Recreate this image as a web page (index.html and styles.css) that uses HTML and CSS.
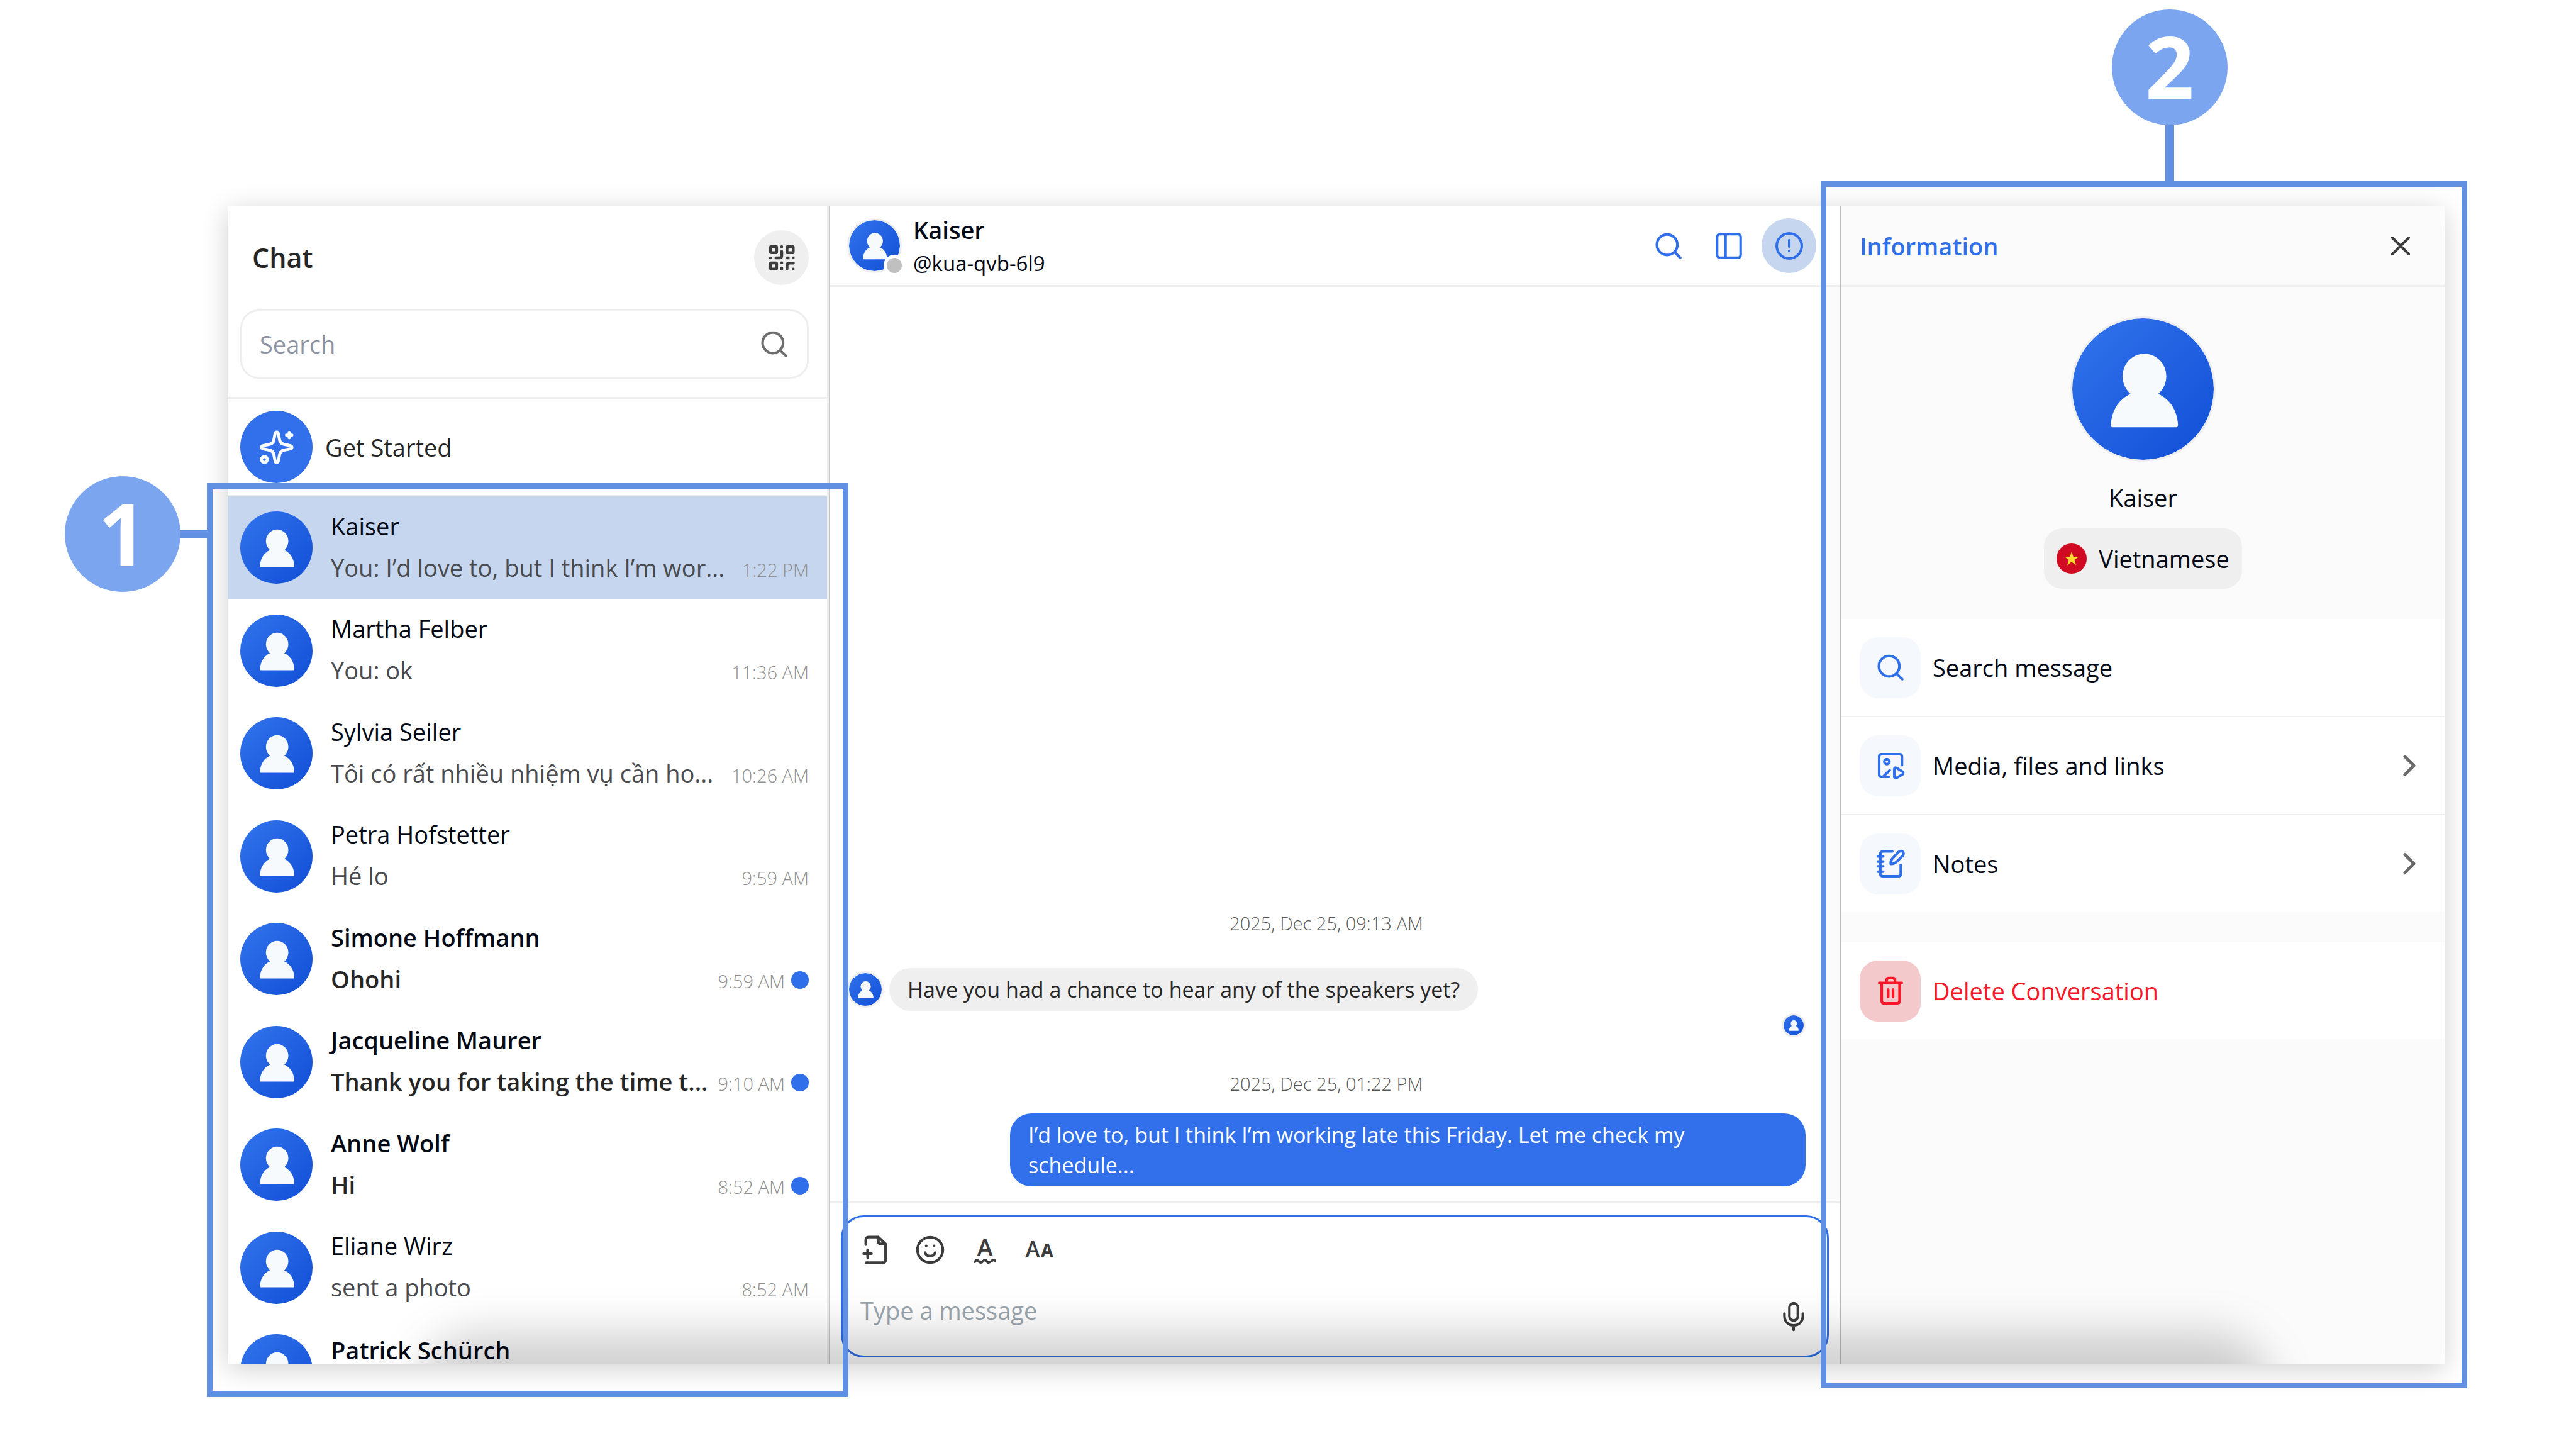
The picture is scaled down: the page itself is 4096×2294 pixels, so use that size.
FILE: index.html
```html
<!DOCTYPE html>
<html lang="en">
<head>
<meta charset="utf-8">
<title>Chat</title>
<link rel="stylesheet" href="styles.css">
</head>
<body>
<svg class="sprite" aria-hidden="true">
  <symbol id="person" viewBox="0 0 100 100">
    <ellipse cx="51" cy="41" rx="15.5" ry="16"/>
    <path d="M28.3 77Q27.2 77 27.3 74.500C28 65 33 57 41 53.500H61C69 57 74 65 74.700 74.500Q74.800 77 73.700 77Z"/>
  </symbol>
  <symbol id="search" viewBox="0 0 20 20">
    <circle cx="9.100" cy="9.200" r="6.800"/><path d="M13.900 14 17.800 17.800"/>
  </symbol>
  <symbol id="chevron" viewBox="0 0 20 20"><path d="M7 4 13 10 7 16"/></symbol>
</svg>

<div class="stage">
  <main class="app">
    <section class="sidebar">
      <header class="sidebar-head">
        <h1 class="sidebar-title">Chat</h1>
        <button class="round-btn qr" aria-label="QR code">
          <svg class="icon heavy" viewBox="0 0 20 20">
            <rect x="2.500" y="2.500" width="4.100" height="4.100" rx=".5"/>
            <rect x="13.500" y="2.500" width="4.100" height="4.100" rx=".5"/>
            <rect x="2.500" y="13.300" width="4.100" height="4.100" rx=".5"/>
            <path d="M10 2.600V2.610M10 5.800V8.500Q10 10 8.500 10H6.200M2.400 10H2.410M13.400 10H14.300M17.600 10H17.610M10 13.200V13.210M10 16.700V17.500M13.500 17.400V14.800Q13.500 13.400 15 13.400H17.700M17.600 17.400H17.610"/>
          </svg>
        </button>
      </header>
      <label class="search-box">
        <input class="search-input" type="text" placeholder="Search" aria-label="Search">
        <svg class="icon grey"><use href="#search"/></svg>
      </label>
      <a class="get-started" href="#start">
        <span class="avatar flat">
          <svg class="spark" viewBox="0 0 24 24">
            <path d="M10.900 3.200C11.200 1.600 12.800 1.600 13.100 3.200L14 7.600Q14.500 9.500 16.400 10L20.800 10.900C22.400 11.200 22.400 12.800 20.800 13.100L16.400 14Q14.500 14.500 14 16.400L13.100 20.800C12.800 22.400 11.200 22.400 10.900 20.800L10 16.400Q9.500 14.500 7.600 14L3.200 13.100C1.600 12.800 1.600 11.200 3.200 10.900L7.600 10Q9.500 9.500 10 7.600Z"/>
            <path d="M20.200 2.200V5.800M18.400 4H22"/><circle cx="3.900" cy="20.100" r="1.900"/>
          </svg>
        </span>
        <span>Get Started</span>
      </a>
      <ul class="chats">
        <li class="chat active">
          <span class="avatar"><svg><use href="#person"/></svg></span>
          <div class="chat-text"><p class="name">Kaiser</p>
            <div class="line"><p class="preview">You: I’d love to, but I think I’m wor...</p><time>1:22 PM</time></div></div>
        </li>
        <li class="chat">
          <span class="avatar"><svg><use href="#person"/></svg></span>
          <div class="chat-text"><p class="name">Martha Felber</p>
            <div class="line"><p class="preview">You: ok</p><time>11:36 AM</time></div></div>
        </li>
        <li class="chat">
          <span class="avatar"><svg><use href="#person"/></svg></span>
          <div class="chat-text"><p class="name">Sylvia Seiler</p>
            <div class="line"><p class="preview">Tôi có rất nhiều nhiệm vụ cần ho...</p><time>10:26 AM</time></div></div>
        </li>
        <li class="chat">
          <span class="avatar"><svg><use href="#person"/></svg></span>
          <div class="chat-text"><p class="name">Petra Hofstetter</p>
            <div class="line"><p class="preview">Hé lo</p><time>9:59 AM</time></div></div>
        </li>
        <li class="chat unread">
          <span class="avatar"><svg><use href="#person"/></svg></span>
          <div class="chat-text"><p class="name">Simone Hoffmann</p>
            <div class="line"><p class="preview">Ohohi</p><time>9:59 AM</time><i class="dot"></i></div></div>
        </li>
        <li class="chat unread">
          <span class="avatar"><svg><use href="#person"/></svg></span>
          <div class="chat-text"><p class="name">Jacqueline Maurer</p>
            <div class="line"><p class="preview">Thank you for taking the time t...</p><time>9:10 AM</time><i class="dot"></i></div></div>
        </li>
        <li class="chat unread">
          <span class="avatar"><svg><use href="#person"/></svg></span>
          <div class="chat-text"><p class="name">Anne Wolf</p>
            <div class="line"><p class="preview">Hi</p><time>8:52 AM</time><i class="dot"></i></div></div>
        </li>
        <li class="chat">
          <span class="avatar"><svg><use href="#person"/></svg></span>
          <div class="chat-text"><p class="name">Eliane Wirz</p>
            <div class="line"><p class="preview">sent a photo</p><time>8:52 AM</time></div></div>
        </li>
        <li class="chat unread">
          <span class="avatar"><svg><use href="#person"/></svg></span>
          <div class="chat-text"><p class="name">Patrick Schürch</p>
            <div class="line"><p class="preview"></p></div></div>
        </li>
      </ul>
    </section>

    <section class="thread">
      <header class="bar thread-head">
        <span class="avatar medium ring"><svg><use href="#person"/></svg><i class="status"></i></span>
        <div class="who"><h2 class="who-name">Kaiser</h2><p class="who-id">@kua-qvb-6l9</p></div>
        <button class="round-btn" aria-label="Search"><svg class="icon blue"><use href="#search"/></svg></button>
        <button class="round-btn" aria-label="Columns">
          <svg class="icon blue" viewBox="0 0 20 20"><rect x="2.200" y="2.200" width="15.600" height="15.600" rx="1.800"/><path d="M7.800 2.200V17.800"/></svg>
        </button>
        <button class="round-btn pressed" aria-label="Information">
          <svg class="icon blue" viewBox="0 0 20 20"><circle cx="10" cy="10" r="8.300"/><path d="M10 6.300V10.400M10 13.200V13.300"/></svg>
        </button>
      </header>
      <div class="scroller">
        <div class="messages">
          <p class="date first">2025, Dec 25, 09:13 AM</p>
          <div class="msg-in"><span class="avatar small ring"><svg><use href="#person"/></svg></span><p class="bubble">Have you had a chance to hear any of the speakers yet?</p></div>
          <span class="avatar tiny ring"><svg><use href="#person"/></svg></span>
          <p class="date">2025, Dec 25, 01:22 PM</p>
          <p class="bubble mine">I’d love to, but I think I’m working late this Friday. Let me check my schedule...</p>
        </div>
        <div class="track"></div>
      </div>
      <footer class="foot">
        <form class="composer">
          <div class="tools">
            <button type="button" class="tool" aria-label="Add file"><svg class="icon" viewBox="0 0 20 20"><path d="M3.600 6.500V3.200Q3.600 1.500 5.300 1.500H12L16.700 6V16.800Q16.700 18.500 15 18.500H3.900M12 1.800V4.700Q12 6 13.300 6H16.500M4.800 9.900V15.100M2.200 12.500H7.400"/></svg></button>
            <button type="button" class="tool" aria-label="Emoji"><svg class="icon" viewBox="0 0 20 20"><circle cx="10" cy="10" r="8.400"/><path d="M7.400 7.300V7.500M12.600 7.300V7.500M6.700 11.800C7.600 14.800 12.400 14.800 13.300 11.800"/></svg></button>
            <button type="button" class="tool" aria-label="Text style"><svg class="glyph" viewBox="0 0 58 58"><text x="29" y="39" font-size="38" font-weight="600">A</text><path d="M13 48Q16 43 19 47T26 47T32 47T39 47T45 47"/></svg></button>
            <button type="button" class="tool" aria-label="Font size"><svg class="glyph" viewBox="0 0 58 58"><text x="18" y="40" font-size="34" font-weight="600">A</text><text x="41" y="40" font-size="28" font-weight="700">A</text></svg></button>
          </div>
          <div class="entry">
            <textarea class="entry-text" rows="1" placeholder="Type a message" aria-label="Message"></textarea>
            <button type="button" class="mic" aria-label="Record"><svg class="icon" viewBox="0 0 20 20"><rect x="7.200" y="1.200" width="5.600" height="11.400" rx="2.800"/><path d="M3.900 8V9.600C3.900 17.900 16.100 17.900 16.100 9.600V8M10 16V18.900"/></svg></button>
          </div>
        </form>
      </footer>
    </section>

    <aside class="info">
      <header class="bar info-head">
        <h2 class="info-title">Information</h2>
        <button class="close" aria-label="Close"><svg class="icon" viewBox="0 0 20 20"><path d="M4.600 4.600 15.400 15.400M15.400 4.600 4.600 15.400"/></svg></button>
      </header>
      <div class="profile">
        <span class="avatar large ring"><svg><use href="#person"/></svg></span>
        <p class="profile-name">Kaiser</p>
        <p class="lang"><svg class="flag" viewBox="0 0 48 48"><circle cx="24" cy="24" r="24" fill="#cf0a22"/><path fill="#ffd92e" d="M24 13 26.700 21H35.200L28.400 26.100 31 34.500 24 29.300 17 34.500 19.600 26.100 12.800 21H21.300Z"/></svg>Vietnamese</p>
      </div>
      <nav class="menu">
        <a class="item" href="#search-message"><span class="tile"><svg class="icon"><use href="#search"/></svg></span><span class="label">Search message</span></a>
        <a class="item" href="#media"><span class="tile"><svg class="icon" viewBox="0 0 20 20"><path d="M17.600 9.800V4Q17.600 2.500 16.100 2.500H4Q2.500 2.500 2.500 4V15.900Q2.500 17.500 4 17.500H9.200M9.500 13.100 5.300 17.200M12.500 12.400C12.500 11.500 13.200 11.200 14 11.600L18 14.100Q18.900 15 18 15.800L14 18.200C13.200 18.600 12.500 18.300 12.500 17.400Z"/><circle cx="7.600" cy="7.400" r="1.700"/></svg></span><span class="label">Media, files and links</span><svg class="icon go"><use href="#chevron"/></svg></a>
        <a class="item" href="#notes"><span class="tile"><svg class="icon" viewBox="0 0 20 20"><path d="M11.200 1.900H5Q3.300 1.900 3.300 3.600V16.700Q3.300 18.400 5 18.400H15.200Q16.800 18.400 16.800 16.800V10.800M1.600 5.200H5.200M1.600 8.600H5.200M1.600 11.800H5.200M1.600 15.300H5.200M10.200 10.200C10 8.500 10.300 7.600 11.300 6.500L15.400 2.200C17.600.600 19.800 2.800 18 4.800L13.900 8.900C12.800 9.900 11.800 10.300 10.200 10.200Z"/></svg></span><span class="label">Notes</span><svg class="icon go"><use href="#chevron"/></svg></a>
      </nav>
      <button class="item danger"><span class="tile"><svg class="icon" viewBox="0 0 20 20"><path d="M2.500 4.800H17.500M7.400 4.600V3.200Q7.400 1.600 9 1.600H11.500Q13 1.600 13 3.200V4.600M4.200 5V16.800Q4.200 18.400 5.800 18.400H14.400Q16 18.400 16 16.800V5M8.500 9.200V14.200M11.700 9.200V14.200"/></svg></span><span class="label">Delete Conversation</span></button>
    </aside>
  </main>

  <div class="callout one"><span class="badge">1</span></div>
  <div class="callout two"><span class="badge">2</span></div>
</div>
</body>
</html>
```
FILE: styles.css
```css
* { box-sizing: border-box; margin: 0; padding: 0; }

body {
  min-height: 100vh;
  padding: 328px 209px 126px 362px;
  display: grid;
  background: #fff;
  color: #030a16;
  font-family: "Open Sans", "Noto Sans", sans-serif;
  font-size: 38px;
  line-height: 58px;
}
button { border: 0; background: none; font: inherit; color: inherit; }
a { color: inherit; text-decoration: none; }
input, textarea { border: 0; outline: 0; background: none; font: inherit; }
h1, h2 { font-size: inherit; font-weight: inherit; }
.sprite { position: absolute; width: 0; height: 0; }

.stage { position: relative; display: grid; }
.app {
  position: relative;
  display: grid;
  grid-template-columns: 958px 1fr 961px;
  overflow: hidden;
  height: calc(100vh - 454px);
  background: #fff;
}
.stage::before {
  content: "";
  position: absolute;
  inset: 0;
  box-shadow: 0 8px 40px rgba(0, 0, 0, .19);
}
/* soft shade rising from the bottom edge */
.app::after {
  content: "";
  position: absolute;
  left: 300px;
  right: 274px;
  top: calc(100% - 50px);
  height: 240px;
  border-radius: 100px;
  background: rgba(0, 0, 0, .18);
  filter: blur(34px);
  pointer-events: none;
}

/* icons */
.icon {
  width: 48px;
  height: 48px;
  flex: none;
  display: block;
  fill: none;
  stroke: #3c3c3c;
  stroke-width: 1.7;
  stroke-linecap: round;
  stroke-linejoin: round;
}
.icon.heavy { stroke-width: 1.9; }
.icon.grey { stroke: #6e6e6e; }
.icon.blue { stroke: #2f6fea; }
.round-btn {
  width: 87px;
  height: 87px;
  border-radius: 50%;
  display: grid;
  place-items: center;
}
.round-btn.qr { background: #efefef; }
.round-btn.pressed { background: #c6d6ee; }

.avatar {
  position: relative;
  flex: none;
  width: 115px;
  height: 115px;
  border-radius: 50%;
  background: linear-gradient(135deg, #2f70ea 10%, #1452d8 90%);
  background-origin: border-box;
  display: grid;
  place-items: center;
}
.avatar > svg { width: 100%; height: 100%; display: block; fill: #f7fafc; }
.avatar.ring { background-clip: padding-box; border: 3px solid #eeeeee; }
.avatar.flat { background: #3170ea; }
.avatar > .spark { width: 58px; height: 58px; fill: none; stroke: #fff; stroke-width: 2; stroke-linejoin: round; stroke-linecap: round; }
.avatar.medium { width: 87px; height: 87px; }
.avatar.small { width: 58px; height: 58px; }
.avatar.tiny { width: 38px; height: 38px; }
.avatar.large { width: 231px; height: 231px; }
.status {
  position: absolute;
  right: -8px;
  bottom: -8px;
  width: 34px;
  height: 34px;
  border-radius: 50%;
  border: 5px solid #fff;
  background: #c0c0c0;
}

/* left column */
.sidebar {
  display: flex;
  flex-direction: column;
  min-height: 0;
  overflow: hidden;
  border-right: 2px solid #c6c6c6;
  box-shadow: inset -3px 0 #eeeeee;
  padding-right: 3px;
}
.sidebar > * { flex: none; }
.sidebar-head {
  display: flex;
  align-items: center;
  justify-content: space-between;
  padding: 38px 29px 39px 39px;
}
.sidebar-title { font-size: 43px; font-weight: 600; color: #262626; }
.search-box {
  display: flex;
  align-items: center;
  height: 110px;
  margin: 0 29px 29px 20px;
  padding: 0 28px;
  border: 3px solid #eeeeee;
  border-radius: 29px;
}
.search-input { flex: 1; min-width: 0; height: 58px; color: #262626; }
.search-input::placeholder { color: #8c94a3; opacity: 1; }
.get-started {
  display: flex;
  align-items: center;
  gap: 20px;
  height: 158px;
  padding-left: 20px;
  border-top: 3px solid #eeeeee;
  border-bottom: 2px solid #eeeeee;
  color: #262626;
}
.chats { list-style: none; }
.chat {
  display: flex;
  align-items: center;
  gap: 29px;
  height: 163px;
  padding: 0 29px 0 20px;
}
.chat:nth-child(even) { height: 164px; }
.chat.active { background: #c6d6ee; }
.chat-text { flex: 1; min-width: 0; display: grid; gap: 8px; }
.line { display: flex; align-items: baseline; min-height: 58px; }
.preview { flex: 1; min-width: 0; white-space: nowrap; color: #494b4f; }
.line time { font-size: 29px; font-weight: 300; color: #8f8f8f; white-space: nowrap; }
.unread .name { font-weight: 600; }
.unread .preview { font-weight: 560; color: #262626; }
.dot { width: 28px; height: 28px; margin-left: 10px; border-radius: 50%; background: #2f6fea; align-self: center; }

/* conversation */
.bar { display: flex; align-items: center; height: 128px; border-bottom: 3px solid #eeeeee; }
.thread { display: flex; flex-direction: column; min-width: 0; min-height: 0; }
.thread-head { padding: 0 38px 0 27px; gap: 9px; }
.who { flex: 1; display: grid; gap: 2px; padding: 3px 0 0 9px; line-height: 52px; }
.who-name { font-weight: 600; }
.who-id { font-size: 33px; font-weight: 400; }
.scroller { flex: 1; display: flex; min-height: 0; }
.messages {
  flex: 1;
  display: flex;
  flex-direction: column;
  justify-content: flex-end;
  padding: 0 29px 24px 27px;
}
.track { width: 26px; background: #fbfbfb; }
.date { font-size: 29px; font-weight: 300; line-height: 39px; text-align: center; color: #5a5a5a; margin: 54px 0 28px; }
.date.first { margin-bottom: 52px; }
.msg-in { display: flex; align-items: center; gap: 9px; }
.bubble { padding: 10px 29px; border-radius: 34px; background: #efefef; color: #262626; font-size: 34px; line-height: 48px; }
.bubble.mine { align-self: flex-end; width: 83%; background: #3170ea; color: #fff; }
.messages > .tiny { align-self: flex-end; margin-top: 4px; }
.foot { border-top: 3px solid #eeeeee; padding: 19px 18px 10px 17px; }
.composer { display: grid; gap: 38px; padding: 23px 29px 38px 23px; border: 3px solid #2f6fea; border-radius: 36px; background: #fff; }
.tools { display: flex; gap: 29px; }
.tool { width: 58px; height: 58px; display: grid; place-items: center; }
.glyph { width: 58px; height: 58px; display: block; overflow: visible; fill: #3c3c3c; text-anchor: middle; }
.glyph path { fill: none; stroke: #3c3c3c; stroke-width: 4; stroke-linecap: round; }
.entry { display: flex; align-items: flex-end; padding-left: 5px; }
.entry-text { flex: 1; height: 63px; resize: none; overflow: hidden; line-height: 58px; }
.entry-text::placeholder { color: #9aa5ae; opacity: 1; }

/* information column */
.info { border-left: 2px solid #bcbcbc; background: #fbfbfb; min-width: 0; }
.info-head { justify-content: space-between; padding: 0 46px 0 29px; }
.info-title { font-weight: 600; color: #2f6fea; }
.profile { display: flex; flex-direction: column; align-items: center; padding: 47px 0 48px; }
.profile-name { margin: 28px 0 20px; font-weight: 500; }
.lang { display: flex; align-items: center; gap: 19px; height: 96px; padding: 0 20px; border-radius: 29px; background: #efefef; }
.flag { width: 48px; height: 48px; display: block; }
.item { display: flex; align-items: center; gap: 19px; width: 100%; height: 154px; padding: 0 32px 0 29px; background: #fff; text-align: left; }
.item + .item { height: 156px; border-top: 2px solid #eeeeee; }
.label { flex: 1; }
.tile { width: 97px; height: 97px; border-radius: 29px; background: #f5f9fd; display: grid; place-items: center; }
.tile .icon { stroke: #2f6fea; }
.icon.go { stroke: #6a6a6a; stroke-width: 2; }
.danger { margin-top: 48px; color: #fb1728; }
.danger .tile { background: #f4c9cb; }
.danger .icon { stroke: #fb1728; }

/* numbered callouts laid over the window */
.callout { position: absolute; border: 9px solid #6190e2; pointer-events: none; }
.callout.one { left: -33px; top: 440px; width: 1020px; bottom: -53px; }
.callout.two { right: -36px; top: -40px; width: 1028px; bottom: -39px; }
.badge {
  position: absolute;
  width: 184px;
  height: 184px;
  border-radius: 50%;
  background: #7ba5ee;
  color: #fff;
  font-size: 136px;
  font-weight: 700;
  line-height: 180px;
  text-align: center;
}
.one .badge { left: -235px; top: -20px; }
.two .badge { left: 454px; top: -282px; }
.badge::after { content: ""; position: absolute; background: #6190e2; }
.one .badge::after { left: 184px; top: 85px; width: 42px; height: 14px; }
.two .badge::after { left: 85px; top: 184px; width: 14px; height: 90px; }
```
